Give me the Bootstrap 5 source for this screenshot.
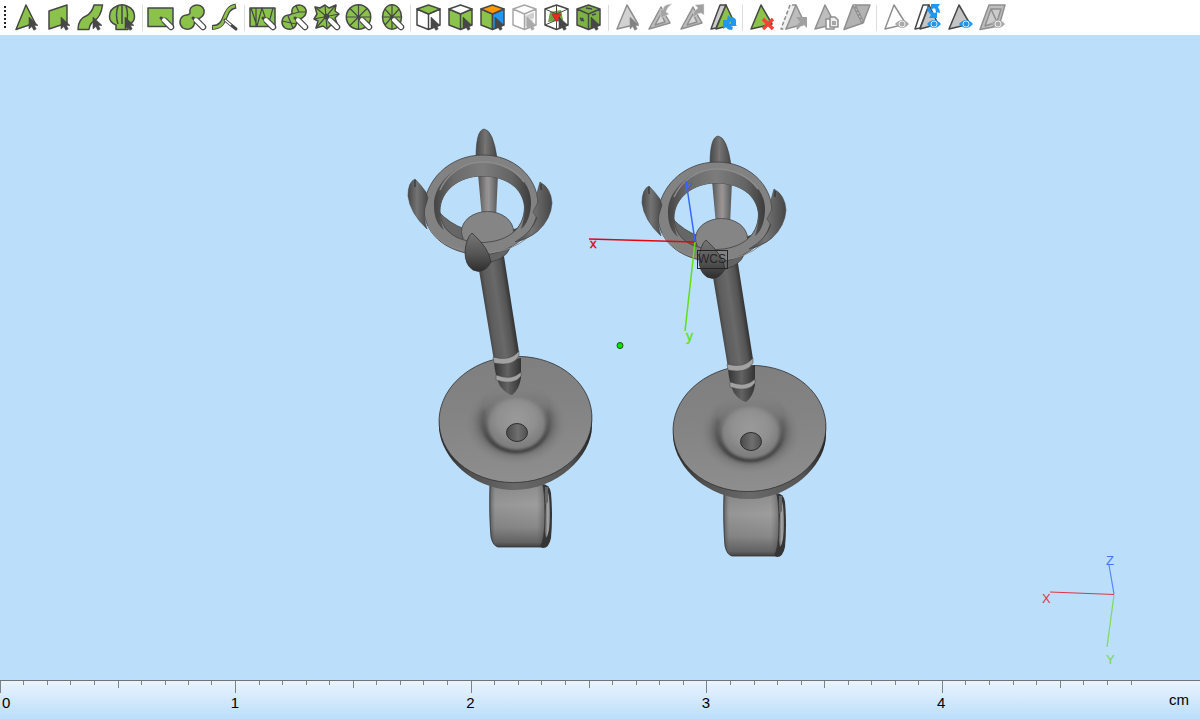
<!DOCTYPE html>
<html lang="en">
<head>
<meta charset="utf-8">
<meta name="viewport" content="width=device-width, initial-scale=1">
<title>Model viewer</title>
<link href="https://cdn.jsdelivr.net/npm/bootstrap@5.3.0/dist/css/bootstrap.min.css" rel="stylesheet">
<style>
  body { background: #bbdefb; font-family: "Liberation Sans", Arial, sans-serif; }
  .toolstrip { height: 35px; }
  .grip { width: 2px; height: 24px; margin: 0 5px 0 4px; background: repeating-linear-gradient(#222 0 2px, transparent 2px 4px); }
  .tool { width: 32px; height: 35px; line-height: 0; }
  .tool:hover { background: #e3f2fd; }
  .tool svg { width: 32px; height: 35px; stroke: #474747; stroke-width: 1.5; stroke-linejoin: round; fill: #8bc34a; }
  .tool .off { stroke: #8f8f8f; fill: #bdbdbd; }
  .group-gap { width: 6px; height: 26px; background: linear-gradient(#dcdcdc, #dcdcdc) center / 1px 100% no-repeat; }
  .scene { min-height: 0; }
  .scene text { font-family: "Liberation Sans", Arial, sans-serif; }
  .ruler { height: 39px; border-top: 1px solid #6e747a; background: linear-gradient(#eaf4fd, #bbdefb); font-size: 15px; line-height: 16px; color: #000; }
  .ticks { width: 100%; height: 12px; }
  .marks { grid-template-columns: 19.1% repeat(3, 19.65%) 1fr; padding-top: 2px; padding-left: 2px; }
  .marks .unit { line-height: 10px; margin-right: 11px; }
</style>
</head>
<body>
<svg width="0" height="0" class="position-absolute" aria-hidden="true">
  <defs>
    <path id="cur" d="M18 17V29L20.8 26.6L22.8 30.2L25.2 29L23.4 25.4H27Z" stroke-width=".6"/>
    <g id="pen" stroke-linecap="round" fill="none"><path d="M16 18L20 21L26 27" stroke="#474747" stroke-width="3"/><path d="M20 21L26 27" stroke="#474747" stroke-width="6.5"/><path d="M19 20L26 27" stroke="#fff" stroke-width="4"/></g>
    <g id="eye" stroke="none"><path d="M16 24Q23 16 30 24Q23 32 16 24Z"/><circle cx="23" cy="24" r="3" fill="none" stroke="#fff" stroke-width=".8"/></g>
  </defs>
</svg>
<div class="d-flex flex-column vh-100 overflow-hidden">
  <nav class="toolstrip bg-white d-flex align-items-center flex-shrink-0" aria-label="Selection tools">
    <div class="grip"></div>
    <button class="tool btn p-0 border-0 rounded-0" aria-label="Select triangle"><svg viewBox="0 0 32 35"><path d="M15 5L5 29.5L24 23Z"/><use href="#cur" fill="#474747"/></svg></button>
    <button class="tool btn p-0 border-0 rounded-0" aria-label="Select plane"><svg viewBox="0 0 32 35"><path d="M6 11L24 5V23L6 29Z"/><use href="#cur" fill="#474747"/></svg></button>
    <button class="tool btn p-0 border-0 rounded-0" aria-label="Select surface"><svg viewBox="0 0 32 35"><path d="M27.5 5H19Q17 13 11 16Q3 19 3 29.5H14Q15 23 19 21Q26 17 27.5 5Z"/><use href="#cur" fill="#474747"/></svg></button>
    <button class="tool btn p-0 border-0 rounded-0" aria-label="Select shell"><svg viewBox="0 0 32 35"><path d="M9 29.5V25Q2 22 2.5 16Q3 9 9 6.5Q15 3 21 6.5Q27 9 27.5 16Q28 22 21 25V29.5Z"/><path d="M11 6Q8 15 11 24M15 5V24M19 6Q22 15 19 24" fill="none"/><use href="#cur" fill="#474747"/></svg></button>
    <div class="group-gap"></div>
    <button class="tool btn p-0 border-0 rounded-0" aria-label="Rectangle brush"><svg viewBox="0 0 32 35"><path d="M3 8H28V26.5H3Z"/><use href="#pen"/></svg></button>
    <button class="tool btn p-0 border-0 rounded-0" aria-label="Free brush"><svg viewBox="0 0 32 35"><path d="M13 13C12 7 17 5 20 5C25 5 28 9 27 13C26 18 21 19 19 19C17 20 18 22 17 25C15 30 9 30 6 28C2 25 2 19 6 16C9 14 12 16 13 13Z"/><use href="#pen"/></svg></button>
    <button class="tool btn p-0 border-0 rounded-0" aria-label="Curve brush"><svg viewBox="0 0 32 35"><path d="M3 27.5C20 27 12 9 27 6" fill="none" stroke-width="5"/><path d="M4 27.5C20 27 12 9 26 6" fill="none" stroke="#8bc34a" stroke-width="2.8"/><path d="M16 20L27 29" stroke-width="3" stroke-linecap="round"/><path d="M16 20L22 25" stroke="#fff" stroke-width="1.5"/></svg></button>
    <div class="group-gap"></div>
    <button class="tool btn p-0 border-0 rounded-0" aria-label="Rectangle mesh"><svg viewBox="0 0 32 35"><path d="M3 8H28V26.5H3Z"/><path d="M4 8L10 26L15 8L21 26L26 8M9 8V26" fill="none" stroke-width="1.2"/><use href="#pen"/></svg></button>
    <button class="tool btn p-0 border-0 rounded-0" aria-label="Free mesh"><svg viewBox="0 0 32 35"><path d="M13 13C12 7 17 5 20 5C25 5 28 9 27 13C26 18 21 19 19 19C17 20 18 22 17 25C15 30 9 30 6 28C2 25 2 19 6 16C9 14 12 16 13 13Z"/><path d="M3 21L17 24M9 16L14 28M13 14L20 12L27 12M20 12L17 6" fill="none" stroke-width="1.2"/><use href="#pen"/></svg></button>
    <button class="tool btn p-0 border-0 rounded-0" aria-label="Star mesh"><svg viewBox="0 0 32 35"><path d="M4 7L9 8L14 5L18 8L25 5L24 11L28 14L24 18L27 26L20 25L16 29L12 26L5 28L7 21L3 19L6 14Z"/><path d="M4 7L27 26M25 5L5 28M14 5L16 29M28 14L3 19" fill="none" stroke-width="1.2"/><circle cx="15.5" cy="16.5" r="2" fill="#474747"/><use href="#pen"/></svg></button>
    <button class="tool btn p-0 border-0 rounded-0" aria-label="Circle mesh"><svg viewBox="0 0 32 35"><circle cx="15.5" cy="17" r="12.2"/><path d="M15.5 5V29M3 17H27M7 8.5L24 25.5M24 8.5L7 25.5" fill="none" stroke-width="1.2"/><use href="#pen"/></svg></button>
    <button class="tool btn p-0 border-0 rounded-0" aria-label="Ellipse mesh"><svg viewBox="0 0 32 35"><ellipse cx="17" cy="17" rx="9.5" ry="12.2"/><path d="M17 5V29M8 17H26M10 9L24 25M24 9L10 25" fill="none" stroke-width="1.2"/><use href="#pen"/></svg></button>
    <div class="group-gap"></div>
    <button class="tool btn p-0 border-0 rounded-0" aria-label="Top face"><svg viewBox="0 0 32 35"><path d="M4 9L15.5 14V29.5L4 25ZM27 9L15.5 14V29.5L27 25Z" fill="#fff"/><path d="M15.5 5L4 9L15.5 14L27 9Z"/><use href="#cur" fill="#474747"/></svg></button>
    <button class="tool btn p-0 border-0 rounded-0" aria-label="Side faces"><svg viewBox="0 0 32 35"><path d="M4 9L15.5 14V29.5L4 25ZM27 9L15.5 14V29.5L27 25Z"/><path d="M15.5 5L4 9L15.5 14L27 9Z" fill="#fff"/><use href="#cur" fill="#474747"/></svg></button>
    <button class="tool btn p-0 border-0 rounded-0" aria-label="Coloured faces"><svg viewBox="0 0 32 35"><path d="M4 9L15.5 14V29.5L4 25Z"/><path d="M27 9L15.5 14V29.5L27 25Z" fill="#2196f3"/><path d="M15.5 5L4 9L15.5 14L27 9Z" fill="#ff9800"/><use href="#cur" fill="#474747"/></svg></button>
    <button class="tool btn p-0 border-0 rounded-0" aria-label="Transparent faces"><svg viewBox="0 0 32 35"><g class="off"><path d="M4 9L15.5 14V29.5L4 25ZM27 9L15.5 14V29.5L27 25ZM15.5 5L4 9L15.5 14L27 9Z" fill="#fff" stroke="#a8a8a8"/><path d="M16 16L25 12V18L18 21L25 19L19 26L16 27Z" fill="#d0d0d0" stroke="none"/><use href="#cur" fill="#aaa" stroke="#aaa"/></g></svg></button>
    <button class="tool btn p-0 border-0 rounded-0" aria-label="Inner faces"><svg viewBox="0 0 32 35"><path d="M15.5 5L4 9V25L15.5 29.5L27 25V9Z" fill="#fff"/><path d="M9 12L20 10L22 20L7 22Z" fill="#71a343" stroke="none"/><path d="M4 9L15.5 14L27 9M15.5 14V29M4 25L15.5 20L27 25M15.5 5V14" fill="none" stroke-width="1"/><path d="M11 14H20L15.5 22Z" fill="#f22" stroke="#a33" stroke-width="1"/><use href="#cur" fill="#474747"/></svg></button>
    <button class="tool btn p-0 border-0 rounded-0" aria-label="Marked faces"><svg viewBox="0 0 32 35"><path d="M4 9L15.5 14V29.5L4 25ZM27 9L15.5 14V29.5L27 25ZM15.5 5L4 9L15.5 14L27 9Z" fill="#7cb342"/><path d="M13 8L19 9M7 18L11 21M10 18L8 21M19 15L23 14" fill="none" stroke-width="1.7"/><use href="#cur" fill="#474747"/></svg></button>
    <div class="group-gap"></div>
    <button class="tool btn p-0 border-0 rounded-0" aria-label="Pick triangle"><svg viewBox="0 0 32 35"><g class="off"><path d="M16 5L6 29L27 24Z" fill="#d2d2d2"/><use href="#cur" x="1" fill="#808080"/></g></svg></button>
    <button class="tool btn p-0 border-0 rounded-0" aria-label="Expand selection"><svg viewBox="0 0 32 35"><g class="off"><path d="M18 7L6 29L27 23Z"/><path d="M18 14L12 25L22 22Z" fill="#d8d8d8"/><path d="M29 4Q20 4 20 10L17 9L18 18L26 14L23 12Q24 7 29 4Z" fill="#a5a5a5" stroke="#ddd" stroke-width=".5"/></g></svg></button>
    <button class="tool btn p-0 border-0 rounded-0" aria-label="Shrink selection"><svg viewBox="0 0 32 35"><g class="off"><path d="M18 7L6 29L27 23Z"/><path d="M18 14L12 25L22 22Z" fill="#d8d8d8"/><path d="M29 4V15L26 13Q22 13 19 17Q17 12 23 8L20 5Z" fill="#a0a0a0" stroke="#ddd" stroke-width=".5"/></g></svg></button>
    <button class="tool btn p-0 border-0 rounded-0" aria-label="Invert selection"><svg viewBox="0 0 32 35"><path d="M13 5L4 29L9 28L19 5Z" fill="#ccc"/><path d="M19 5L9 29L28 24Z"/><path d="M21 15L23 17Q28 17 29 20V25L30 26H22L24 23Q24 20 20 20ZM16 20H24L22 23Q23 26 26 27L25 30Q20 30 19 27L16 29Z" fill="#2196f3" stroke="none"/></svg></button>
    <div class="group-gap"></div>
    <button class="tool btn p-0 border-0 rounded-0" aria-label="Delete selection"><svg viewBox="0 0 32 35"><path d="M16 5L6 29L27 24Z"/><path d="M18 19L28 29M28 19L18 29" stroke="#f44336" stroke-width="3.5"/></svg></button>
    <button class="tool btn p-0 border-0 rounded-0" aria-label="Move selection"><svg viewBox="0 0 32 35"><g class="off"><path d="M13 5L4 29H9L19 5Z" fill="#eee" stroke="none"/><path d="M19 5H13L4 29H9" fill="none" stroke-dasharray="4 2"/><path d="M19 5L9 29L28 24Z"/><path d="M19 17H30V28L27 25Q23 26 20 30Q18 26 23 22Z" fill="#a0a0a0" stroke="none"/></g></svg></button>
    <button class="tool btn p-0 border-0 rounded-0" aria-label="Copy selection"><svg viewBox="0 0 32 35"><g class="off"><path d="M16 5L6 29L26 24Z"/><path d="M17 19H22L25 22V29H17Z" fill="#fff"/><path d="M21 17H26L29 20V27H21ZM23 22H27M23 24H27" fill="#eee"/></g></svg></button>
    <button class="tool btn p-0 border-0 rounded-0" aria-label="Split plane"><svg viewBox="0 0 32 35"><g class="off"><path d="M12 5H29L22 23L3 29.5Z" fill="#b2b2b2"/><path d="M13 5L22 23" stroke-width="3.5"/><path d="M13 5L22 23" stroke="#ccc" stroke-width="1" stroke-dasharray="2 2"/></g></svg></button>
    <div class="group-gap"></div>
    <button class="tool btn p-0 border-0 rounded-0" aria-label="Hide selection"><svg viewBox="0 0 32 35"><g class="off"><path d="M15 5L6 29L27 24Z" fill="#fff"/><use href="#eye" fill="#aaa"/></g></svg></button>
    <button class="tool btn p-0 border-0 rounded-0" aria-label="Swap visibility"><svg viewBox="0 0 32 35"><path d="M12 5L4 29L9 28L18 5Z" fill="#fff"/><path d="M18 5L9 29L27 24Z" fill="#c4c4c4"/><path d="M20 4H29L27 7Q29 10 29 13L25 12Q25 9 23 8L20 10ZM16 6L19 8Q20 12 23 13L26 12V18H18L20 15Q16 12 16 6Z" fill="#2196f3" stroke="none"/><use href="#eye" fill="#2196f3"/></svg></button>
    <button class="tool btn p-0 border-0 rounded-0" aria-label="Show selection"><svg viewBox="0 0 32 35"><path d="M16 5L6 29L27 24Z" fill="#c4c4c4"/><use href="#eye" fill="#2196f3"/></svg></button>
    <button class="tool btn p-0 border-0 rounded-0" aria-label="Show plane"><svg viewBox="0 0 32 35"><g class="off"><path d="M14 5H30L24 26L5 29.5Z"/><path d="M16 9H26L22 22L10 26ZM16 9L22 22" fill="#ccc"/><use href="#eye" fill="#aaa"/></g></svg></button>
  </nav>

  <main class="scene flex-fill">
    <svg class="d-block w-100 h-100" viewBox="0 35 1200 645" role="img" aria-label="Two earring models">
      <defs>
        <linearGradient id="prong"><stop offset="0" stop-color="#484848"/><stop offset=".45" stop-color="#747474"/><stop offset="1" stop-color="#464646"/></linearGradient>
        <linearGradient id="darkprong" x2="0" y2="1"><stop offset="0" stop-color="#777"/><stop offset=".55" stop-color="#555"/><stop offset="1" stop-color="#2e2e2e"/></linearGradient>
        <linearGradient id="stem"><stop offset="0" stop-color="#555"/><stop offset=".5" stop-color="#9a9a9a"/><stop offset="1" stop-color="#555"/></linearGradient>
        <linearGradient id="wall"><stop offset="0" stop-color="#444"/><stop offset=".2" stop-color="#6a6a6a"/><stop offset=".5" stop-color="#7c7c7c"/><stop offset=".8" stop-color="#646464"/><stop offset="1" stop-color="#3c3c3c"/></linearGradient>
        <linearGradient id="shaft" gradientUnits="userSpaceOnUse" x1="485" y1="318" x2="512" y2="314"><stop offset="0" stop-color="#3c3c3c"/><stop offset=".2" stop-color="#5c5c5c"/><stop offset=".55" stop-color="#696969"/><stop offset=".85" stop-color="#545454"/><stop offset="1" stop-color="#383838"/></linearGradient>
        <linearGradient id="tip"><stop offset="0" stop-color="#333"/><stop offset=".5" stop-color="#636363"/><stop offset="1" stop-color="#333"/></linearGradient>
        <linearGradient id="plate" x2="0" y2="1"><stop offset="0" stop-color="#7f7f7f"/><stop offset=".4" stop-color="#838383"/><stop offset="1" stop-color="#8e8e8e"/></linearGradient>
        <linearGradient id="rim"><stop offset="0" stop-color="#262626"/><stop offset=".2" stop-color="#505050"/><stop offset=".5" stop-color="#696969"/><stop offset=".85" stop-color="#555"/><stop offset="1" stop-color="#222"/></linearGradient>
        <radialGradient id="well"><stop offset=".6" stop-color="#4a4a4a"/><stop offset=".68" stop-color="#666"/><stop offset=".82" stop-color="#7a7a7a" stop-opacity=".7"/><stop offset="1" stop-color="#858585" stop-opacity="0"/></radialGradient>
        <linearGradient id="welltop" x2="0" y2="1"><stop offset="0" stop-color="#838383"/><stop offset=".25" stop-color="#737373"/><stop offset=".6" stop-color="#555"/><stop offset="1" stop-color="#353535"/></linearGradient>
        <linearGradient id="wellcap" x2="0" y2="1"><stop offset="0" stop-color="#838383"/><stop offset=".5" stop-color="#7a7a7a" stop-opacity=".9"/><stop offset="1" stop-color="#707070" stop-opacity="0"/></linearGradient>
        <radialGradient id="dome" cy=".4"><stop offset="0" stop-color="#9a9a9a"/><stop offset=".65" stop-color="#909090"/><stop offset="1" stop-color="#808080"/></radialGradient>
        <linearGradient id="hole"><stop offset="0" stop-color="#4a4a4a"/><stop offset=".55" stop-color="#6f6f6f"/><stop offset="1" stop-color="#505050"/></linearGradient>
        <linearGradient id="barrel" x2="0" y2="1"><stop offset="0" stop-color="#8b8b8b"/><stop offset=".35" stop-color="#9d9d9d"/><stop offset=".7" stop-color="#888"/><stop offset=".93" stop-color="#626262"/><stop offset="1" stop-color="#404040"/></linearGradient>
        <linearGradient id="barreledge"><stop offset="0" stop-color="#222" stop-opacity=".5"/><stop offset=".1" stop-color="#555" stop-opacity=".1"/><stop offset=".85" stop-color="#555" stop-opacity="0"/><stop offset="1" stop-color="#333" stop-opacity=".4"/></linearGradient>
        <linearGradient id="bore"><stop offset="0" stop-color="#555"/><stop offset=".6" stop-color="#aaa"/><stop offset="1" stop-color="#777"/></linearGradient>
        <filter id="soft" x="-10%" y="-10%" width="120%" height="120%"><feGaussianBlur stdDeviation="1.5"/></filter>
        <g id="base" stroke-linejoin="round">
          <!-- barrel under the plate -->
          <path d="M541 484Q550 484 551 493Q553 516 551 538Q549 548 543 548L535 546V484Z" fill="#353535"/>
          <path d="M547 490Q550 495 550 515Q550 533 546 538Q544 530 545 515Q546 502 547 490Z" fill="url(#bore)"/>
          <path d="M545 487H548V502L545 505Z" fill="#666"/>
          <path d="M490 482H542Q545 490 545 515Q545 540 540 547L498 547Q493 546 491 537Q489 515 490 482Z" fill="url(#barrel)"/>
          <path d="M490 482H542Q545 490 545 515Q545 540 540 547L498 547Q493 546 491 537Q489 515 490 482Z" fill="url(#barreledge)" stroke="#333" stroke-width=".8"/>
          <!-- round plate -->
          <path d="M439 420V429C442 460 475 490 514 490C557 490 592 456 592 426V415Z" fill="url(#rim)"/>
          <ellipse cx="515.5" cy="419.5" rx="76.5" ry="63" transform="rotate(-4 515.5 419.5)" fill="url(#plate)" stroke="#333" stroke-width=".8"/>
          <ellipse cx="516" cy="423" rx="52" ry="42" fill="url(#well)"/>
          <ellipse cx="516" cy="424" rx="34" ry="29" fill="url(#welltop)" filter="url(#soft)"/>
          <ellipse cx="516" cy="404" rx="34" ry="18" fill="url(#wellcap)" filter="url(#soft)"/>
          <ellipse cx="516.5" cy="424" rx="29" ry="26" fill="url(#dome)" filter="url(#soft)"/>
          <ellipse cx="517" cy="432.5" rx="10.5" ry="9" fill="url(#hole)" stroke="#2e2e2e"/>
        </g>
        <g id="stud" stroke-linejoin="round">
          <!-- post -->
          <path d="M494 362Q495 376 500 386Q506 394 512 395Q519 390 521 378V358Z" fill="url(#tip)"/>
          <path d="M476 252L503 250L519 352Q512 363 494 361Z" fill="url(#shaft)"/>
          <path d="M493 357Q510 362 519 351V356Q513 367 494 363Z" fill="#a2a2a2" stroke="#444" stroke-width=".5"/>
          <path d="M496 375Q512 381 521 372V376Q514 386 496 380Z" fill="#a2a2a2" stroke="#444" stroke-width=".5"/>
          <!-- cup and back stem -->
          <path d="M478 174H498L496 218H482Z" fill="url(#stem)"/>
          <path d="M474 244L513 237Q511 258 491 262Q478 260 474 244Z" fill="#646464" stroke="#333" stroke-width=".6"/>
          <path d="M438 211Q450 224 465 229L461 245L440 232Z" fill="#666" stroke="#333" stroke-width=".6"/>
          <path d="M526 224Q518 229 508 230L508 242L526 236Z" fill="#444"/>
          <ellipse cx="487.5" cy="231.5" rx="26" ry="20" fill="#858585" stroke="#444" stroke-width=".8"/>
          <path d="M476 158Q476 130 484 129Q493 130 497 158Z" fill="url(#prong)" stroke="#3a3a3a" stroke-width=".6"/>
          <!-- root of the right prong, behind the ring -->
          <path d="M532 205L542 214L538 231Q528 240 512 243L515 234Z" fill="#555"/>
          <!-- ring -->
          <path fill-rule="evenodd" d="M424 210C424 181 449 155 483 155C514 155 537 177 538 203C539 233 512 253 482 255C449 254 425 236 424 210ZM440 211C441 234 460 242 482 242.5C505 242 524 231 524.5 207C523 188 506 176 482 176C459 176 440 191 440 211Z" fill="#828282" stroke="#404040" stroke-width=".8"/>
          <path fill-rule="evenodd" d="M434 206C433 184 456 162 482 162C509 162 531 180 531 202C531 214 527 225 521 229C524 220 524.5 213 524.5 207C523 188 506 176 482 176C459 176 440 191 440 211C440 219 442 226 444 230C437 225 434 216 434 206Z" fill="url(#wall)"/>
          <path d="M440 190C447 174 464 162 482 162C500 162 516 170 524 182" fill="none" stroke="#8c8c8c" stroke-width="1.5"/>
          <path d="M428 226Q438 246 466 251M490 253Q513 250 527 238" fill="none" stroke="#8c8c8c" stroke-width="1"/>
          <!-- side and front prongs -->
          <path d="M415 179Q408 182 408 196Q410 213 427 229Q423 216 425 208L428 198L426 192Q420 184 415 179Z" fill="url(#prong)" stroke="#444" stroke-width=".6"/>
          <path d="M540 182Q551 188 552 203Q551 219 538 231Q528 239 515 242Q532 232 537 218L533 212L538 202L537 193Z" fill="url(#prong)" stroke="#444" stroke-width=".6"/>
          <path d="M415 180V187M541 184V190" stroke="#292929"/>
          <path d="M472 233Q466 238 465 252Q465 265 473 270Q484 275 491 262Q489 248 472 233Z" fill="url(#darkprong)" stroke="#333" stroke-width=".8"/>
          <path d="M485 144V153M488 178L487 213" stroke="#b57070" stroke-width=".6" opacity=".6"/>
        </g>
      </defs>
      <use href="#base"/>
      <use href="#stud"/>
      <use href="#base" x="234" y="9"/>
      <use href="#stud" x="234" y="7"/>
      <!-- work coordinate axes -->
      <g fill="none" stroke-width="1.5">
        <path d="M589 239L695 242" stroke="#e10612"/>
        <path d="M686 181L695 241" stroke="#3465ff"/>
        <path d="M695 242L685 331" stroke="#62df16"/>
        <rect x="697.5" y="250.5" width="30" height="18" stroke="#252525" stroke-width="1"/>
      </g>
      <text x="590" y="248" font-size="13" fill="#e10612" stroke="#e10612" stroke-width=".4">x</text>
      <text x="686" y="190" font-size="13" fill="#3465ff">z</text>
      <text x="686" y="341" font-size="14" fill="#62df16" stroke="#62df16" stroke-width=".3">y</text>
      <text x="698" y="263" font-size="12" fill="#252525">WCS</text>
      <circle cx="620" cy="345.5" r="3" fill="#00e600" stroke="#145214"/>
      <!-- orientation axes -->
      <g fill="none" stroke-width="1.2">
        <path d="M1050 592L1114 594.5" stroke="#d93844"/>
        <path d="M1109 565L1114 594" stroke="#5585ff"/>
        <path d="M1114 595L1107 647" stroke="#7ddb57"/>
      </g>
      <text x="1042" y="603" font-size="13" fill="#d93844">X</text>
      <text x="1106" y="565" font-size="13" fill="#4474ff">Z</text>
      <text x="1106" y="664" font-size="13" fill="#74d94d">Y</text>
    </svg>
  </main>

  <footer class="ruler flex-shrink-0">
    <svg class="ticks d-block" viewBox="0 0 1200 12" preserveAspectRatio="none" aria-hidden="true">
      <path fill="none" stroke="#7d8489" d="M.5 0V12M235.5 0V12M471.5 0V12M706.5 0V12M942.5 0V12M118.5 0V7M353.5 0V7M589.5 0V7M824.5 0V7M1060.5 0V7M23.5 0V4M47.5 0V4M70.5 0V4M94.5 0V4M141.5 0V4M165.5 0V4M188.5 0V4M211.5 0V4M259.5 0V4M282.5 0V4M306.5 0V4M329.5 0V4M376.5 0V4M400.5 0V4M423.5 0V4M447.5 0V4M494.5 0V4M518.5 0V4M541.5 0V4M565.5 0V4M612.5 0V4M636.5 0V4M659.5 0V4M683.5 0V4M730.5 0V4M754.5 0V4M777.5 0V4M801.5 0V4M848.5 0V4M871.5 0V4M895.5 0V4M918.5 0V4M965.5 0V4M989.5 0V4M1013.5 0V4M1036.5 0V4M1083.5 0V4M1107.5 0V4M1131.5 0V4"/>
    </svg>
    <div class="marks d-grid">
      <span>0</span><span>1</span><span>2</span><span>3</span>
      <div class="d-flex justify-content-between"><span>4</span><span class="unit">cm</span></div>
    </div>
  </footer>
</div>
<script src="https://cdn.jsdelivr.net/npm/bootstrap@5.3.0/dist/js/bootstrap.bundle.min.js"></script>
</body>
</html>
